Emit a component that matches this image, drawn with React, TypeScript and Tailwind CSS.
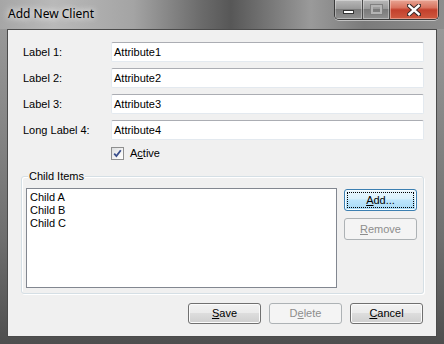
import React from 'react';

type BtnKind = 'normal' | 'focused' | 'disabled';

const btnBase = 'flex items-center justify-center rounded-[3px] border text-[11px] leading-none';

const btnKinds: Record<BtnKind, string> = {
    normal:
        'border-[#707070] text-black bg-[linear-gradient(to_bottom,#f2f2f2_0%,#ebebeb_45%,#dddddd_50%,#cfcfcf_100%)] shadow-[inset_0_0_0_1px_#fbfbfb]',
    focused:
        'border-[#3c7fb1] text-black bg-[linear-gradient(to_bottom,#eaf6fd_0%,#d9f0fc_45%,#bee6fd_50%,#a7d9f5_100%)] shadow-[inset_0_0_0_1px_#f6fcff]',
    disabled: 'border-[#adb2b5] text-[#8d8d8d] bg-[#f4f4f4]',
};

const WinButton: React.FC<{ kind?: BtnKind; className?: string; children: React.ReactNode }> = ({
    kind = 'normal',
    className = '',
    children,
}) => (
    <div className={`${btnBase} ${btnKinds[kind]} ${className}`}>
        {kind === 'focused' ? (
            <span className="flex h-[calc(100%-4px)] w-[calc(100%-4px)] items-center justify-center border border-dotted border-black">
                {children}
            </span>
        ) : (
            children
        )}
    </div>
);

const fields = [
    { label: 'Label 1:', value: 'Attribute1' },
    { label: 'Label 2:', value: 'Attribute2' },
    { label: 'Label 3:', value: 'Attribute3' },
    { label: 'Long Label 4:', value: 'Attribute4' },
];

const App: React.FC = () => {
    return (
        <div className="flex h-[344px] w-[444px] flex-col overflow-hidden bg-[linear-gradient(to_bottom,#9d9d9d_0%,#8a8a8a_30%,#6e6e6e_70%,#4e4e4e_100%)] font-['Liberation_Sans',Arial,sans-serif]">
            {/* title bar */}
            <div className="flex h-[29px] shrink-0 items-start bg-[linear-gradient(90deg,#a6a6a6_0%,#b9b9b9_12%,#a4a4a4_30%,#6c6c6c_45%,#575757_52%,#7c7c7c_62%,#9a9a9a_70%,#7b7b7b_82%,#8d8d8d_100%)]">
                <span className="mt-[6px] pl-[8px] font-['Noto_Sans',sans-serif] text-[12px] leading-[16px] text-black [text-shadow:0_0_6px_rgba(255,255,255,0.95),0_0_10px_rgba(255,255,255,0.7)]">
                    Add New Client
                </span>
                <div className="ml-auto mr-[5px] flex h-[20px] overflow-hidden rounded-b-[5px] border border-t-0 border-[#3a3a3a] shadow-[0_1px_0_rgba(255,255,255,0.5)]">
                    <div className="flex w-[28px] items-center justify-center border-r border-[#4a4a4a] bg-[linear-gradient(to_bottom,#b8b8b8_0%,#9a9a9a_45%,#7a7a7a_50%,#909090_100%)] shadow-[inset_0_0_0_1px_rgba(255,255,255,0.35)]">
                        <div className="mt-[5px] h-[4px] w-[11px] border border-[#333] bg-white" />
                    </div>
                    <div className="flex w-[27px] items-center justify-center border-r border-[#4a4a4a] bg-[linear-gradient(to_bottom,#b8b8b8_0%,#9a9a9a_45%,#7a7a7a_50%,#909090_100%)] shadow-[inset_0_0_0_1px_rgba(255,255,255,0.35)]">
                        <div className="h-[9px] w-[11px] border-2 border-[#b4b4b4] shadow-[0_0_0_1px_#808080]" />
                    </div>
                    <div className="flex w-[48px] items-center justify-center bg-[linear-gradient(to_bottom,#e8a594_0%,#d9735f_40%,#c3402c_52%,#cf5a40_100%)] shadow-[inset_0_0_0_1px_rgba(255,220,210,0.45)]">
                        <svg width="14" height="12" viewBox="0 0 14 12">
                            <path d="M2 1.5 L12 10.5 M12 1.5 L2 10.5" stroke="#3b2a28" strokeWidth="4.4" strokeLinecap="square" />
                            <path d="M2.3 1.8 L11.7 10.2 M11.7 1.8 L2.3 10.2" stroke="#ffffff" strokeWidth="2.4" strokeLinecap="square" />
                        </svg>
                    </div>
                </div>
            </div>

            {/* client area */}
            <div className="mx-[7px] flex h-[308px] flex-col border border-[#4b4b4b] bg-[#f0f0f0] pl-[13px] pr-[12px] pt-[12px] text-[11px] text-black">
                <div className="flex flex-col gap-[6px]">
                    {fields.map((f) => (
                        <div key={f.label} className="flex h-[20px] items-center">
                            <span className="w-[90px] pl-[2px]">{f.label}</span>
                            <div className="flex h-[20px] flex-1 items-center rounded-[2px] border border-[#e3e9ef] border-t-[#abadb3] bg-white pl-[2px]">
                                {f.value}
                            </div>
                        </div>
                    ))}
                </div>

                <div className="mt-[7px] flex h-[13px] items-center gap-[6px] pl-[90px]">
                    <div className="flex h-[13px] w-[13px] items-center justify-center border border-[#8e8f8f] bg-[linear-gradient(135deg,#dcdedf_0%,#f5f5f5_60%,#ffffff_100%)]">
                        <svg width="9" height="9" viewBox="0 0 9 9">
                            <path d="M1.2 4.6 L3.4 7 L7.8 1.2" fill="none" stroke="#3a4f8c" strokeWidth="1.8" />
                        </svg>
                    </div>
                    <span>
                        A<span className="underline">c</span>tive
                    </span>
                </div>

                {/* group box */}
                <div className="relative mt-[16px] flex h-[118px] rounded-[3px] border border-[#d5dfe5] pb-[4px] pl-[4px] pr-[6px] pt-[11px] shadow-[inset_1px_1px_0_#ffffff,1px_1px_0_#ffffff]">
                    <span className="absolute left-[6px] top-[-7px] bg-[#f0f0f0] px-[1px] leading-[13px]">Child Items</span>
                    <div className="flex h-[100px] w-[311px] flex-col border border-[#828790] bg-white pl-[3px] pt-[2px] leading-[13px]">
                        <span>Child A</span>
                        <span>Child B</span>
                        <span>Child C</span>
                    </div>
                    <div className="ml-[7px] flex flex-col gap-[7px] pt-[1px]">
                        <WinButton kind="focused" className="h-[22px] w-[73px]">
                            <span>
                                <span className="underline">A</span>dd...
                            </span>
                        </WinButton>
                        <WinButton kind="disabled" className="h-[22px] w-[73px]">
                            <span>
                                <span className="underline">R</span>emove
                            </span>
                        </WinButton>
                    </div>
                </div>

                <div className="mt-[9px] flex justify-end gap-[8px] pr-[1px]">
                    <WinButton className="h-[21px] w-[73px]">
                        <span>
                            <span className="underline">S</span>ave
                        </span>
                    </WinButton>
                    <WinButton kind="disabled" className="h-[21px] w-[73px]">
                        <span>
                            D<span className="underline">e</span>lete
                        </span>
                    </WinButton>
                    <WinButton className="h-[21px] w-[73px]">
                        <span>
                            <span className="underline">C</span>ancel
                        </span>
                    </WinButton>
                </div>
            </div>
        </div>
    );
};

export default App;
